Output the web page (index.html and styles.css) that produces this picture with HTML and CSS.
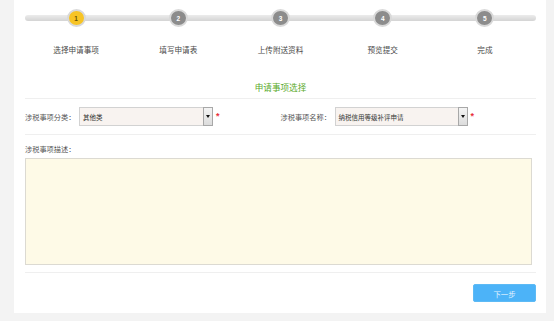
FILE: index.html
```html
<!DOCTYPE html>
<html lang="zh">
<head>
<meta charset="utf-8">
<link rel="stylesheet" href="styles.css">
</head>
<body>
<div class="panel">
  <div class="steps">
    <div class="step"><span class="dot active">1</span><span class="step-label">选择申请事项</span></div>
    <div class="step"><span class="dot">2</span><span class="step-label">填写申请表</span></div>
    <div class="step"><span class="dot">3</span><span class="step-label">上传附送资料</span></div>
    <div class="step"><span class="dot">4</span><span class="step-label">预览提交</span></div>
    <div class="step"><span class="dot">5</span><span class="step-label">完成</span></div>
  </div>
  <div class="title">申请事项选择</div>
  <div class="row">
    <div class="field">
      <span class="label">涉税事项分类：</span>
      <span class="select select-a"><span class="value">其他类</span><span class="arrow"></span></span>
      <span class="req">*</span>
    </div>
    <div class="field">
      <span class="label">涉税事项名称：</span>
      <span class="select select-b"><span class="value">纳税信用等级补评申请</span><span class="arrow"></span></span>
      <span class="req">*</span>
    </div>
  </div>
  <div class="desc">
    <div class="label desc-label">涉税事项描述：</div>
    <div class="textarea"></div>
  </div>
  <div class="actions">
    <button class="btn">下一步</button>
  </div>
</div>
</body>
</html>
```
FILE: styles.css
```css
* { box-sizing: border-box; }
html, body { margin: 0; padding: 0; }
body {
  background: #f3f3f3;
  font-family: "Noto Sans CJK SC", "Noto Sans", sans-serif;
  color: #444;
  width: 554px;
  height: 321px;
  overflow: hidden;
}
.panel {
  margin-left: 14px;
  width: 532px;
  height: 313px;
  background: #fff;
  padding: 0 10px 0 11px;
}
.steps {
  position: relative;
  display: grid;
  grid-template-columns: repeat(5, 1fr);
  padding-top: 9px;
}
.steps::before {
  content: "";
  position: absolute;
  left: 0;
  right: 0;
  top: 15px;
  height: 6px;
  border-radius: 3px;
  background: linear-gradient(#ececec, #d4d4d4);
}
.step {
  position: relative;
  display: flex;
  flex-direction: column;
  align-items: center;
}
.dot {
  width: 19px;
  height: 18px;
  border-radius: 50%;
  background: #8c8c8c;
  border: 2px solid #d9d9d9;
  color: #fff;
  font-size: 6.5px;
  font-weight: bold;
  font-family: "Liberation Sans", sans-serif;
  display: flex;
  align-items: center;
  justify-content: center;
}
.dot.active {
  background: #f7c425;
  color: #6b5200;
}
.step-label {
  margin-top: 18px;
  font-size: 7.6px;
  line-height: 10px;
  color: #4a4a4a;
}
.title {
  margin-top: 26px;
  text-align: center;
  color: #5aaa2a;
  font-size: 8.6px;
  line-height: 12px;
  padding-bottom: 5px;
  border-bottom: 1px solid #efefef;
}
.row {
  display: grid;
  grid-template-columns: 1fr 1fr;
  padding: 8px 0 8px;
  border-bottom: 1px solid #efefef;
}
.field {
  display: flex;
  align-items: center;
}
.label {
  font-size: 7.2px;
  line-height: 10px;
  color: #555;
}
.field .label { width: 54px; }
.select {
  height: 19px;
  border: 1px solid #d2d2d2;
  background: #f8f3f0;
  display: flex;
  align-items: center;
  justify-content: space-between;
}
.select-a { width: 134px; }
.select-b { width: 133px; }
.value {
  font-size: 6.5px;
  padding-left: 3px;
  color: #333;
}
.arrow {
  width: 10px;
  height: 19px;
  margin: -1px -1px -1px 0;
  border: 1px solid #a8a8a8;
  background: linear-gradient(#f4f4f4, #dcdcdc);
  display: flex;
  align-items: center;
  justify-content: center;
}
.arrow::after {
  content: "";
  border-left: 2.5px solid transparent;
  border-right: 2.5px solid transparent;
  border-top: 3px solid #111;
}
.req {
  color: #e8303a;
  font-size: 9px;
  font-weight: bold;
  font-family: "Liberation Sans", sans-serif;
  margin-left: 3px;
  margin-top: -2px;
}
.desc {
  padding-top: 9px;
  padding-bottom: 7px;
  border-bottom: 1px solid #efefef;
}
.desc-label { margin-bottom: 4px; }
.textarea {
  width: 507px;
  height: 107px;
  background: #fefae7;
  border: 1px solid #dcdad2;
}
.actions {
  display: flex;
  justify-content: flex-end;
  padding-top: 11px;
}
.btn {
  width: 63px;
  height: 18px;
  border: 1px solid #5dbaf5;
  border-radius: 2px;
  background: #4cb3f8;
  color: #e3f3ff;
  font-family: "Noto Sans CJK SC", sans-serif;
  font-size: 7.4px;
  padding: 0;
}
```
